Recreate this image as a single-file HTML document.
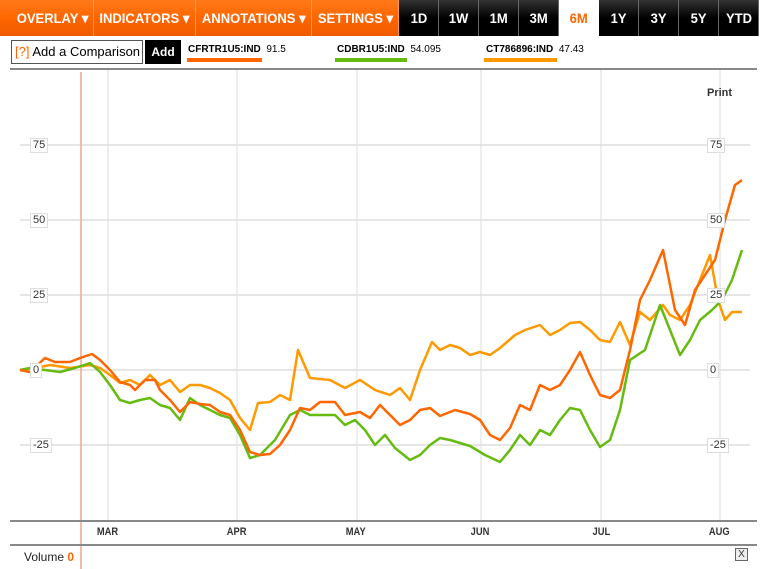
<!DOCTYPE html>
<html><head><style>
body{margin:0;width:764px;height:569px;background:#fff;font-family:"Liberation Sans",sans-serif;position:relative;overflow:hidden}
.b{position:absolute;top:0;height:36px;box-sizing:border-box;color:#fff;font-weight:bold;font-size:14px;line-height:36px;text-align:center;white-space:nowrap}
.b span{display:inline-block;transform:scaleX(.93);transform-origin:center}
.ob{background:linear-gradient(#ff7a1a,#ff6600 50%,#f05a00);border-right:1px solid #ff9a55}
.bb{background:linear-gradient(#333,#000 50%,#000);border-right:1px solid #666;width:40px}
.abs{position:absolute}
.lbl{font-size:10px;color:#000}
.yl{position:absolute;font-size:11px;color:#333;background:#fff;border:1px solid #ddd;padding:0 2px;line-height:13px}
.mo{position:absolute;top:526px;font-size:11px;font-weight:bold;color:#333;transform:scaleX(.85)}
</style></head><body>
<div class="b ob" style="left:0;width:94px;padding-left:12px"><span>OVERLAY ▾</span></div>
<div class="b ob" style="left:94px;width:102px"><span>INDICATORS ▾</span></div>
<div class="b ob" style="left:196px;width:116px"><span>ANNOTATIONS ▾</span></div>
<div class="b ob" style="left:312px;width:87px"><span>SETTINGS ▾</span></div>
<div class="b bb" style="left:399px"><span>1D</span></div>
<div class="b bb" style="left:439px"><span>1W</span></div>
<div class="b bb" style="left:479px"><span>1M</span></div>
<div class="b bb" style="left:519px"><span>3M</span></div>
<div class="b" style="left:559px;width:40px;color:#ff6600"><span>6M</span></div>
<div class="b bb" style="left:599px"><span>1Y</span></div>
<div class="b bb" style="left:639px"><span>3Y</span></div>
<div class="b bb" style="left:679px"><span>5Y</span></div>
<div class="b bb" style="left:719px"><span>YTD</span></div>
<div class="abs" style="left:11px;top:40px;width:132px;height:24px;border:1px solid #555;box-sizing:border-box;font-size:13px;line-height:22px;padding-left:3px;white-space:nowrap"><span style="color:#f60">[?]</span> Add a Comparison</div>
<div class="abs" style="left:145px;top:40px;width:36px;height:24px;background:#000;color:#fff;font-weight:bold;font-size:12px;line-height:24px;text-align:center">Add</div>
<div class="abs lbl" style="left:188px;top:44px"><b>CFRTR1U5:IND</b>&nbsp; 91.5</div>
<div class="abs" style="left:187px;top:58px;width:75px;height:4px;background:#f60"></div>
<div class="abs lbl" style="left:337px;top:44px"><b>CDBR1U5:IND</b>&nbsp; 54.095</div>
<div class="abs" style="left:335px;top:58px;width:72px;height:4px;background:#6b1"></div>
<div class="abs lbl" style="left:486px;top:44px"><b>CT786896:IND</b>&nbsp; 47.43</div>
<div class="abs" style="left:484px;top:58px;width:73px;height:4px;background:#f90"></div>
<div class="abs" style="left:10px;top:68px;width:747px;height:2px;background:#888"></div>
<svg class="abs" style="left:0;top:0" width="764" height="569">
<g stroke="#e6e6e6" stroke-width="2"><line x1="20" y1="145" x2="750" y2="145"/><line x1="20" y1="220" x2="750" y2="220"/><line x1="20" y1="295" x2="750" y2="295"/><line x1="20" y1="370" x2="750" y2="370"/><line x1="20" y1="445" x2="750" y2="445"/></g>
<g stroke="#ddd" stroke-width="1"><line x1="108" y1="70" x2="108" y2="520"/><line x1="237" y1="70" x2="237" y2="520"/><line x1="357" y1="70" x2="357" y2="520"/><line x1="481" y1="70" x2="481" y2="520"/><line x1="601" y1="70" x2="601" y2="520"/><line x1="720" y1="70" x2="720" y2="520"/></g>
<line x1="81" y1="72" x2="81" y2="569" stroke="#f4a58a" stroke-width="1.5"/>
<line x1="10" y1="521" x2="757" y2="521" stroke="#888" stroke-width="2"/>
<line x1="10" y1="545" x2="757" y2="545" stroke="#888" stroke-width="2"/>
<g fill="none" stroke-width="2.5" stroke-linejoin="round">
<polyline stroke="#f90" points="20,370 35,368 50,365 70,368 90,365 100,368 110,375 120,383 130,380 140,385 150,375 160,385 170,380 180,392 190,385 200,385 210,388 220,393 230,400 240,418 250,430 258,403 270,402 280,395 290,400 298,350 310,378 330,380 345,388 360,380 375,390 390,395 400,388 410,400 420,370 432,342 440,350 450,345 460,348 470,355 480,352 490,355 500,348 515,335 525,330 540,325 550,335 560,330 570,323 580,322 590,330 600,340 610,342 620,322 630,345 640,312 650,320 663,305 670,315 680,320 690,305 700,280 710,255 718,300 725,320 732,312 742,312"/>
<polyline stroke="#6b1" points="20,370 30,368 45,370 60,372 75,368 90,363 100,372 110,385 120,400 130,403 140,400 150,398 160,405 170,408 180,420 190,398 200,405 210,410 220,415 230,418 240,435 250,458 260,455 275,440 290,415 300,410 310,415 335,415 345,425 355,420 365,430 375,445 385,435 395,448 410,460 420,455 430,445 440,438 450,440 470,446 485,455 500,462 510,450 520,435 530,445 540,430 550,435 560,420 570,408 580,410 590,430 600,447 610,440 620,410 630,360 645,350 660,305 670,330 680,355 690,340 700,320 712,310 722,300 732,280 742,250"/>
<polyline stroke="#f60" points="20,370 30,372 45,358 55,362 70,362 80,358 92,354 100,360 110,370 120,382 130,385 135,390 145,380 155,380 160,390 170,400 180,412 190,402 200,404 210,405 220,412 230,415 240,430 250,452 260,455 270,454 280,445 290,430 300,408 310,410 320,402 335,402 345,415 360,412 370,418 380,405 390,415 400,425 410,420 420,410 430,408 440,416 455,410 470,414 480,420 490,435 500,440 510,428 520,405 530,410 540,385 550,390 560,385 570,370 580,352 590,375 600,395 610,398 620,390 630,350 640,300 650,280 663,250 675,310 685,325 695,290 705,275 715,260 725,220 735,185 742,180"/>
</g>
</svg>
<div class="yl" style="left:30px;top:138px">75</div><div class="yl" style="left:30px;top:213px">50</div><div class="yl" style="left:30px;top:288px">25</div><div class="yl" style="left:30px;top:363px">0</div><div class="yl" style="left:30px;top:438px">-25</div>
<div class="yl" style="left:707px;top:138px">75</div><div class="yl" style="left:707px;top:213px">50</div><div class="yl" style="left:707px;top:288px">25</div><div class="yl" style="left:707px;top:363px">0</div><div class="yl" style="left:707px;top:438px">-25</div>
<div class="abs" style="left:707px;top:87px;font-size:11px;font-weight:bold;color:#333">Print</div>
<div class="mo" style="left:95px">MAR</div><div class="mo" style="left:225px">APR</div><div class="mo" style="left:344px">MAY</div><div class="mo" style="left:469px">JUN</div><div class="mo" style="left:591px">JUL</div><div class="mo" style="left:707px">AUG</div>
<div class="abs" style="left:24px;top:550px;font-size:12px;color:#222">Volume <span style="color:#f60;font-weight:bold">0</span></div>
<div class="abs" style="left:735px;top:548px;width:11px;height:11px;border:1px solid #666;background:#eee;font-size:10px;line-height:11px;text-align:center;color:#333">X</div>
</body></html>
